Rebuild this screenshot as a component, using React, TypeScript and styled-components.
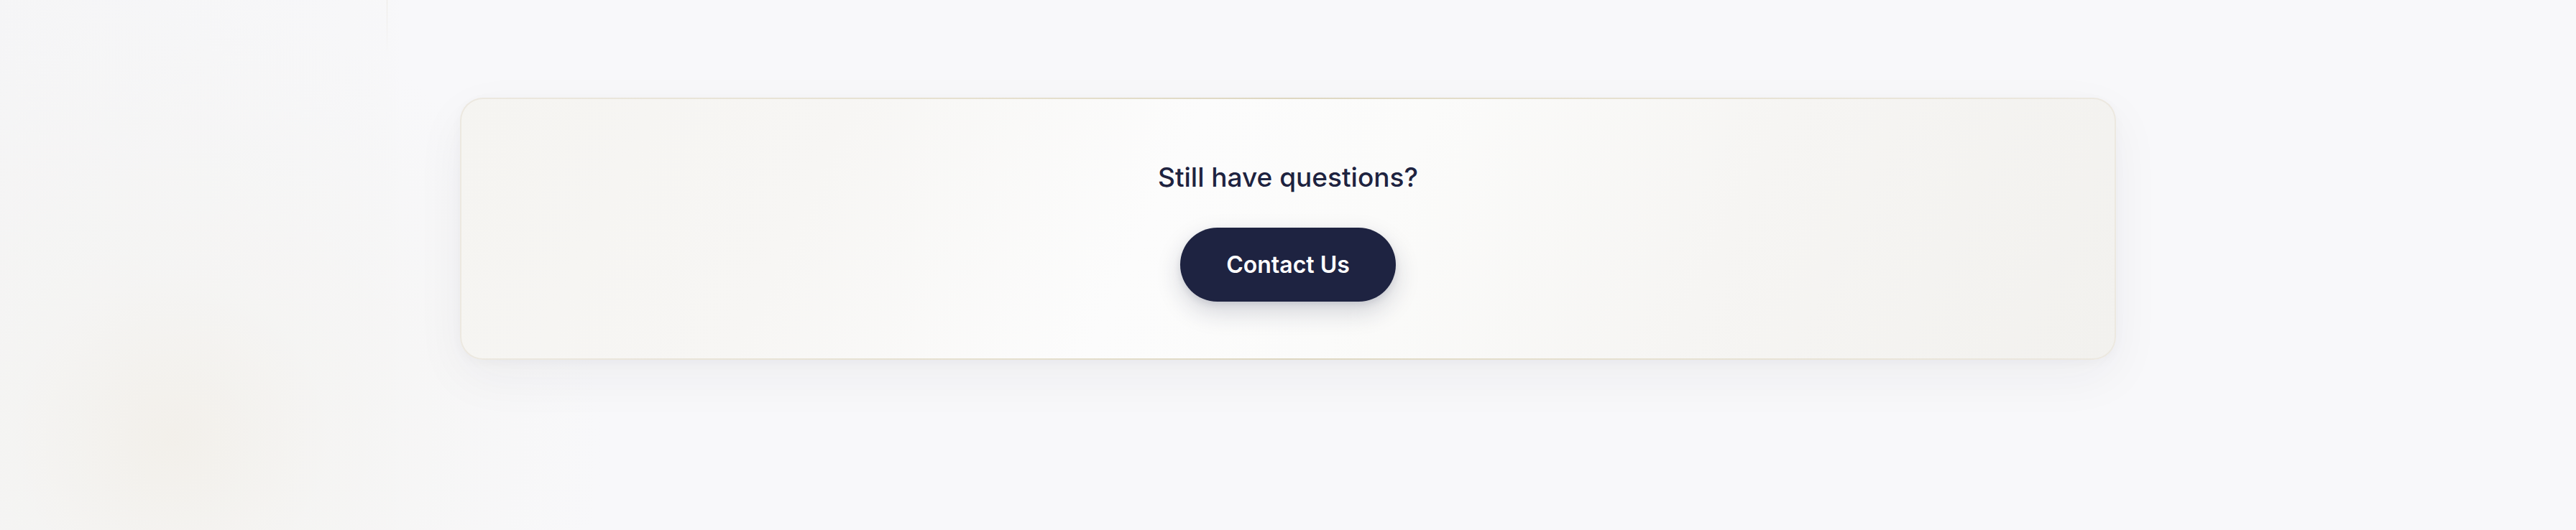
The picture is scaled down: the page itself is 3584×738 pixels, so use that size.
import React from "react";
import styled, { createGlobalStyle } from "styled-components";

const GlobalStyle = createGlobalStyle`
  html, body {
    margin: 0;
    padding: 0;
  }
  body {
    min-height: 738px;
    font-family: Inter, "Noto Sans", "Liberation Sans", sans-serif;
    background:
      radial-gradient(circle at 240px 610px, rgba(242, 239, 233, 0.9) 0px, rgba(244, 243, 240, 0.6) 220px, rgba(246, 246, 246, 0) 600px),
      linear-gradient(90deg, rgba(244, 244, 245, 0.7) 0px, rgba(246, 246, 247, 0.4) 540px, rgba(248, 248, 250, 0) 560px),
      #f8f8fa;
    -webkit-font-smoothing: antialiased;
  }
`;

const Page = styled.main`
  position: relative;
  min-height: 738px;
  box-sizing: border-box;
  padding: 136px 0 0;
  display: flex;
  justify-content: center;
  align-items: flex-start;
`;

const SideRule = styled.div`
  position: absolute;
  left: 538px;
  top: 0;
  width: 1px;
  height: 80px;
  background: linear-gradient(180deg, rgba(232, 228, 220, 0.7), rgba(232, 228, 220, 0));
`;

const Card = styled.section`
  width: 2304px;
  box-sizing: border-box;
  border: 2px solid transparent;
  border-radius: 32px;
  padding: 79px 0;
  display: flex;
  flex-direction: column;
  align-items: center;
  gap: 40px;
  background:
    linear-gradient(115deg, #f5f4f1 0%, #f7f6f4 22%, #fcfcfc 42%, #fbfbfa 55%, #f6f5f3 75%, #f2f1ee 100%) padding-box,
    linear-gradient(90deg, #ece8e0 0%, #e5dfcd 35%, #ded7c1 50%, #e5dfcd 65%, #ece8e0 100%) border-box;
  box-shadow: 0 24px 70px rgba(30, 35, 65, 0.05), 0 4px 16px rgba(30, 35, 65, 0.03);
`;

const Heading = styled.h2`
  margin: 0;
  font-size: 37px;
  line-height: 60px;
  font-weight: 500;
  color: #1e2340;
`;

const ContactButton = styled.button`
  font-family: inherit;
  font-size: 32px;
  font-weight: 600;
  line-height: 39px;
  color: #ffffff;
  background: #1e2341;
  border: none;
  border-radius: 999px;
  padding: 32px 64px;
  cursor: pointer;
  box-shadow: 0 14px 34px rgba(30, 35, 65, 0.18), 0 4px 10px rgba(30, 35, 65, 0.1);
`;

export default function App() {
  return (
    <>
      <GlobalStyle />
      <Page>
        <SideRule />
        <Card>
          <Heading>Still have questions?</Heading>
          <ContactButton>Contact Us</ContactButton>
        </Card>
      </Page>
    </>
  );
}
